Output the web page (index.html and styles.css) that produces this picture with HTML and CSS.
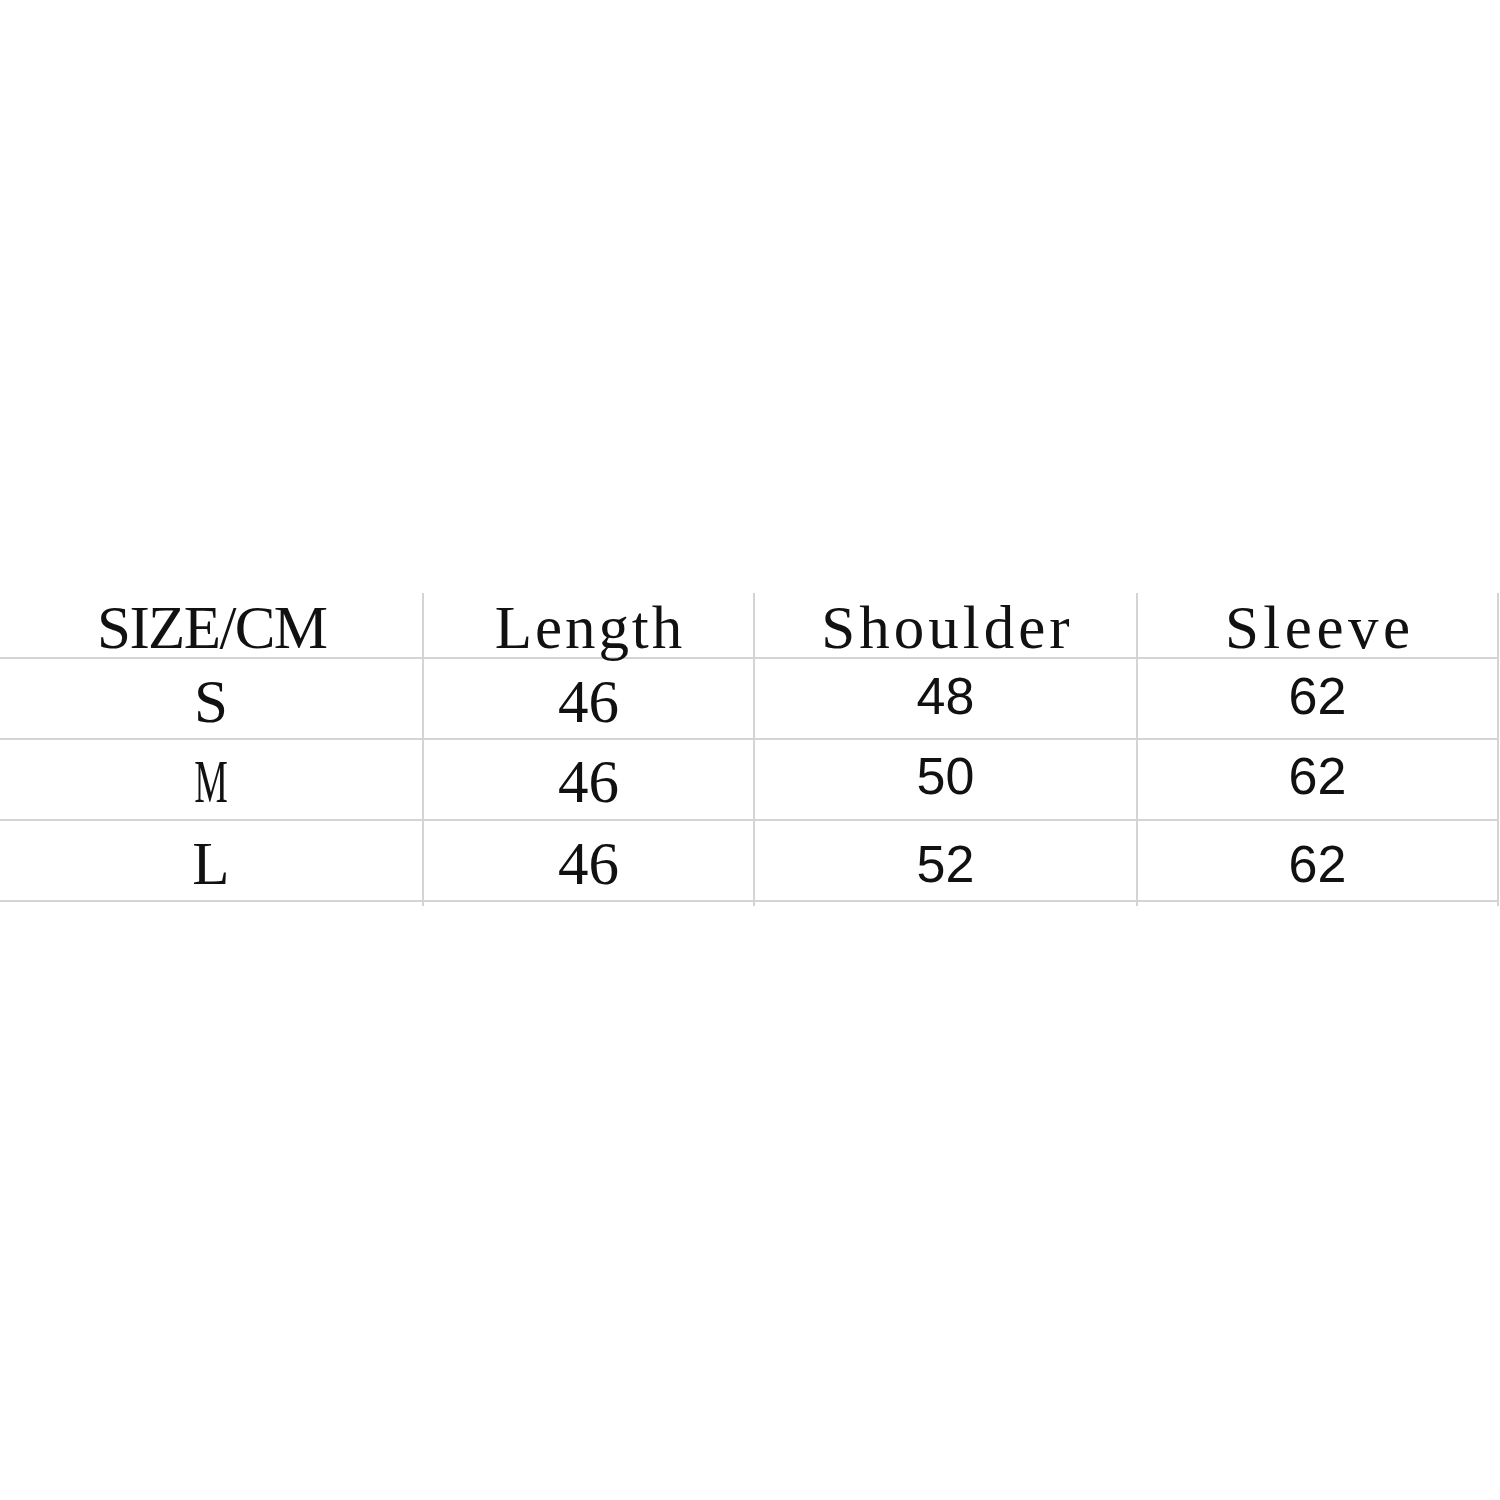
FILE: index.html
```html
<!DOCTYPE html>
<html lang="en">
<head>
<meta charset="utf-8">
<title>Size chart</title>
<link rel="stylesheet" href="styles.css">
</head>
<body>
<div class="page">
  <div class="chart">
    <div class="cell head"><span class="serif sp-size">SIZE/CM</span></div>
    <div class="cell head"><span class="serif sp-length">Length</span></div>
    <div class="cell head"><span class="serif sp-shoulder">Shoulder</span></div>
    <div class="cell head"><span class="serif sp-sleeve">Sleeve</span></div>

    <div class="cell row r1"><span class="serif">S</span></div>
    <div class="cell row r1"><span class="serif">46</span></div>
    <div class="cell row r1 sans-cell"><span class="sans">48</span></div>
    <div class="cell row r1 sans-cell"><span class="sans">62</span></div>

    <div class="cell row r2"><span class="serif narrow">M</span></div>
    <div class="cell row r2"><span class="serif">46</span></div>
    <div class="cell row r2 sans-cell"><span class="sans">50</span></div>
    <div class="cell row r2 sans-cell"><span class="sans">62</span></div>

    <div class="cell row r3"><span class="serif">L</span></div>
    <div class="cell row r3"><span class="serif">46</span></div>
    <div class="cell row r3 sans-cell"><span class="sans">52</span></div>
    <div class="cell row r3 sans-cell"><span class="sans">62</span></div>
  </div>
</div>
</body>
</html>
```

FILE: styles.css
```css
html, body {
  margin: 0;
  padding: 0;
  background: #ffffff;
}

.page {
  width: 1500px;
  height: 1500px;
  padding-top: 593px;
  box-sizing: border-box;
  overflow: hidden;
}

.chart {
  display: grid;
  grid-template-columns: 424px 331px 383px 361px;
  grid-template-rows: 66px 81px 81px 81px;
  color: #111111;
}

.cell {
  position: relative;
  box-sizing: border-box;
  border-right: 2px solid #d4d4d4;
  border-bottom: 2px solid #d4d4d4;
  display: flex;
  justify-content: center;
  align-items: flex-start;
}

.r3::after {
  content: "";
  position: absolute;
  right: -2px;
  bottom: -6px;
  width: 2px;
  height: 4px;
  background: #d4d4d4;
}

.head {
  padding-top: 4px;
}

.row {
  padding-top: 12px;
}

.row.r2 {
  padding-top: 11px;
}

.serif {
  display: inline-block;
  font-family: "Liberation Serif", "Times New Roman", serif;
  font-size: 61px;
  line-height: 61px;
  white-space: nowrap;
}

.narrow {
  transform: scaleX(0.62);
}

.sp-size { letter-spacing: -1.6px; margin-right: -1.6px; }
.sp-length { letter-spacing: 2.9px; margin-right: -2.9px; }
.sp-shoulder { letter-spacing: 4px; margin-right: -4px; }
.sp-sleeve { letter-spacing: 4.5px; margin-right: -4.5px; }

.sans {
  display: inline-block;
  font-family: "Liberation Sans", Arial, sans-serif;
  font-size: 52px;
  line-height: 52px;
}

.sans-cell.r1 { padding-top: 11px; }
.sans-cell.r2 { padding-top: 10px; }
.sans-cell.r3 { padding-top: 17px; }
```
